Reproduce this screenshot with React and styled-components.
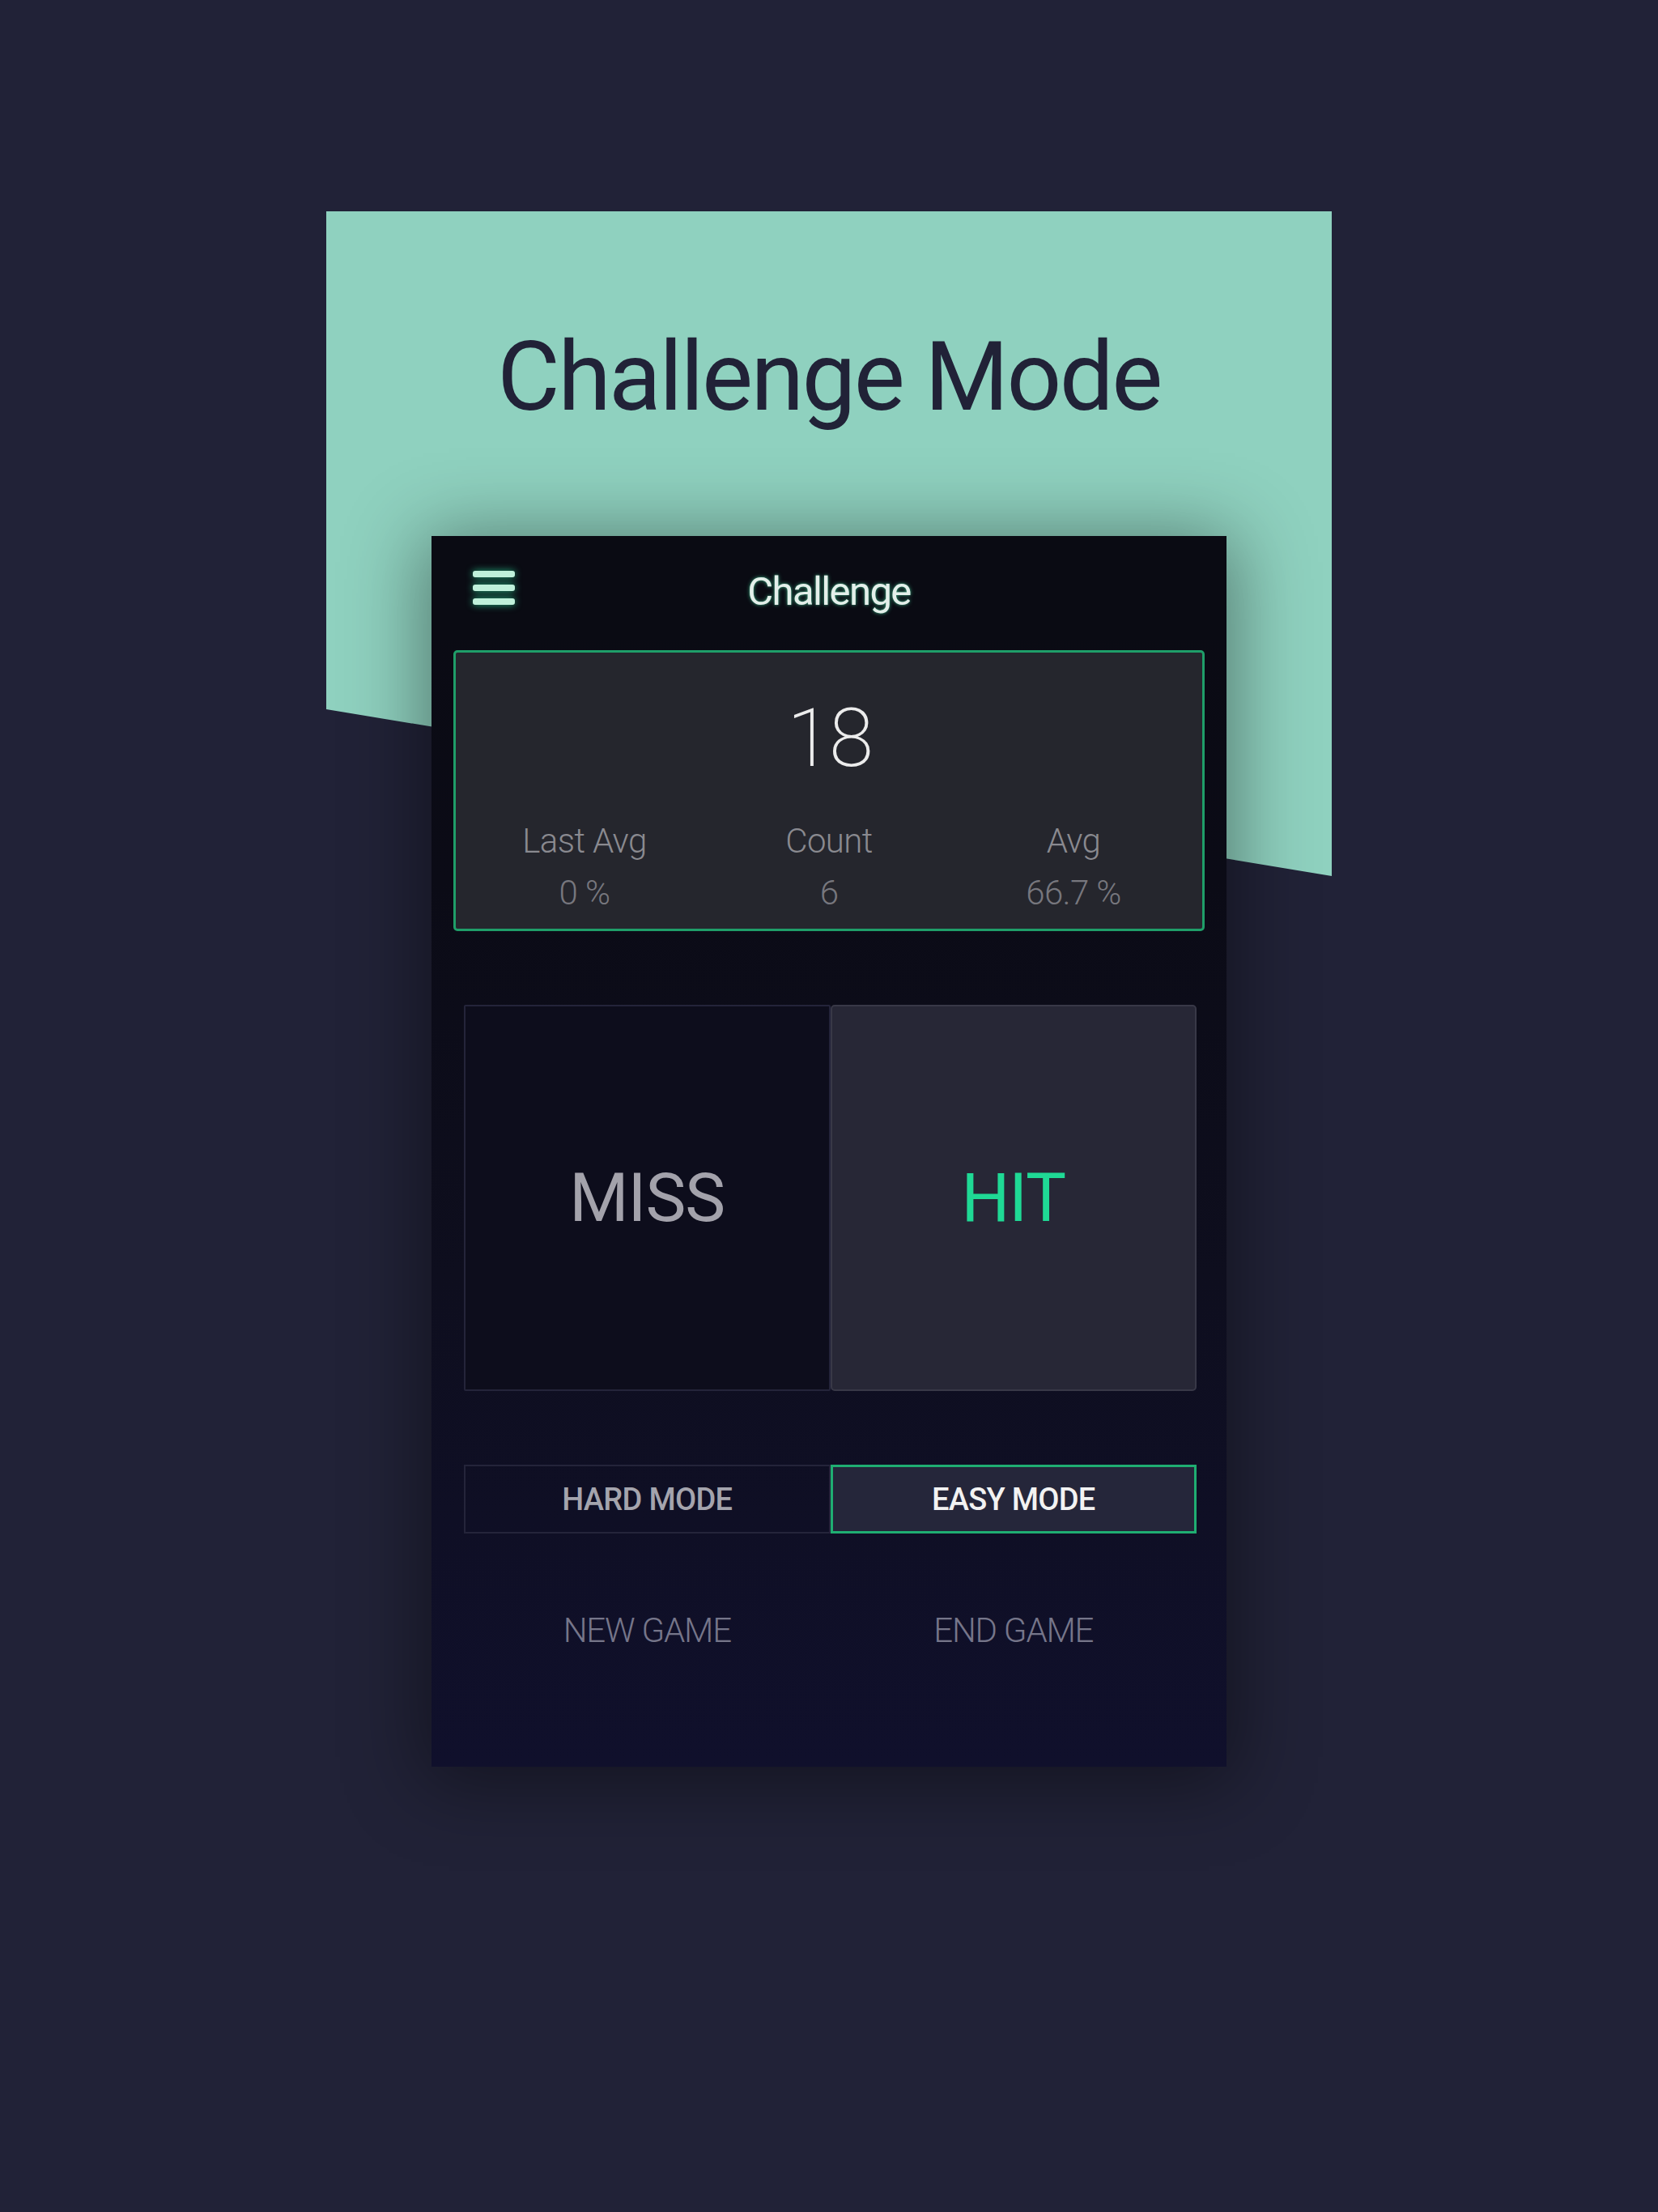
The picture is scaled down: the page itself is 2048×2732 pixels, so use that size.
import React from "react";
import styled, { createGlobalStyle } from "styled-components";

const Global = createGlobalStyle`
  html, body { margin: 0; padding: 0; background: #212237; }
  body { font-family: Roboto, "Liberation Sans", sans-serif; }
  * { box-sizing: border-box; }
`;

const Page = styled.div`
  width: 1242px;
  min-height: 2732px;
  margin: 0 auto;
  padding-top: 261px;
`;

const Hero = styled.section`
  height: 821px;
  background: #8fd1bf;
  clip-path: polygon(0 0, 100% 0, 100% 100%, 0 74.9%);
  padding-top: 145px;
  text-align: center;
`;

const HeroTitle = styled.h1`
  margin: 0;
  font-family: Roboto, "Liberation Sans", sans-serif;
  font-weight: 400;
  font-size: 119px;
  line-height: 1;
  color: #212237;
  letter-spacing: -2.6px;
`;

const Phone = styled.div`
  position: relative;
  z-index: 1;
  width: 982px;
  height: 1520px;
  margin: -420px auto 0;
  background: linear-gradient(180deg, #0a0b13 0%, #0b0b16 28%, #0e0e1e 60%, #10102c 100%);
  box-shadow: 0 10px 90px 10px rgba(0, 0, 0, 0.42);
  display: flex;
  flex-direction: column;
`;

const Header = styled.header`
  height: 128px;
  display: grid;
  grid-template-columns: 1fr auto 1fr;
  align-items: center;
  padding: 0 51px;
  background: #0a0b13;
`;

const MenuIcon = styled.svg`
  width: 52px;
  height: 42px;
  filter: drop-shadow(0 0 5px rgba(40, 200, 140, 0.85));
`;

const HeaderTitle = styled.div`
  font-size: 49px;
  font-weight: 400;
  letter-spacing: -1.6px;
  color: #e4efea;
  text-shadow: 0 0 5px rgba(70, 200, 150, 0.7), 0 0 2px rgba(70, 200, 150, 0.5);
  transform: translateY(4px);
`;

const StatsBox = styled.div`
  margin: 13px 27px 0;
  height: 347px;
  border: 3px solid #1f9e69;
  border-radius: 5px;
  background: #25262d;
  padding-top: 56px;
  display: flex;
  flex-direction: column;
  align-items: center;
`;

const BigNumber = styled.div`
  font-size: 100px;
  font-weight: 200;
  line-height: 1;
  color: #ececec;
  letter-spacing: -3px;
`;

const StatsRow = styled.div`
  margin-top: 56px;
  width: 100%;
  display: grid;
  grid-template-columns: 1fr 1fr 1fr;
  padding: 0 8px;
`;

const Stat = styled.div`
  display: flex;
  flex-direction: column;
  align-items: center;
  gap: 22px;
`;

const StatText = styled.div`
  font-size: 42px;
  font-weight: 300;
  line-height: 1;
  letter-spacing: -0.6px;
  color: ${(p) => (p.$value ? "#77777e" : "#8a8a90")};
`;

const Pair = styled.div`
  display: grid;
  grid-template-columns: 1fr 1fr;
  margin: ${(p) => p.$mt}px 37px 0 40px;
  height: ${(p) => p.$h}px;
`;

const BigButton = styled.button`
  all: unset;
  display: flex;
  align-items: center;
  justify-content: center;
  font-family: Roboto, "Liberation Sans", sans-serif;
  font-size: 84px;
  font-weight: 400;
  letter-spacing: -1px;
  border-radius: ${(p) => (p.$active ? "5px" : "2px")};
  border: 2px solid ${(p) => (p.$active ? "#383847" : "#24243a")};
  background: ${(p) => (p.$active ? "#272736" : "#0d0d1c")};
  color: ${(p) => (p.$active ? "#1fd995" : "#a3a2ab")};
`;

const ModeButton = styled.button`
  all: unset;
  display: flex;
  align-items: center;
  justify-content: center;
  font-family: Roboto, "Liberation Sans", sans-serif;
  font-size: 38px;
  font-weight: 500;
  letter-spacing: -0.7px;
  border: ${(p) => (p.$active ? "3px solid #1fae72" : "2px solid #24243a")};
  background: ${(p) => (p.$active ? "#25263a" : "transparent")};
  color: ${(p) => (p.$active ? "#f2f2f2" : "#a4a4ad")};
`;

const TextButton = styled.button`
  all: unset;
  display: flex;
  align-items: center;
  justify-content: center;
  font-family: Roboto, "Liberation Sans", sans-serif;
  font-size: 42px;
  font-weight: 300;
  letter-spacing: -1.2px;
  color: #76768a;
`;

export default function App() {
  return (
    <>
      <Global />
      <Page>
        <Hero>
          <HeroTitle>Challenge Mode</HeroTitle>
        </Hero>
        <Phone>
          <Header>
            <MenuIcon viewBox="0 0 52 42">
              <rect x="0" y="0" width="52" height="8" rx="3" fill="#bff0da" />
              <rect x="0" y="17" width="52" height="8" rx="3" fill="#bff0da" />
              <rect x="0" y="34" width="52" height="8" rx="3" fill="#bff0da" />
            </MenuIcon>
            <HeaderTitle>Challenge</HeaderTitle>
            <span />
          </Header>
          <StatsBox>
            <BigNumber>18</BigNumber>
            <StatsRow>
              <Stat>
                <StatText>Last Avg</StatText>
                <StatText $value>0 %</StatText>
              </Stat>
              <Stat>
                <StatText>Count</StatText>
                <StatText $value>6</StatText>
              </Stat>
              <Stat>
                <StatText>Avg</StatText>
                <StatText $value>66.7 %</StatText>
              </Stat>
            </StatsRow>
          </StatsBox>
          <Pair $mt={91} $h={477}>
            <BigButton>MISS</BigButton>
            <BigButton $active>HIT</BigButton>
          </Pair>
          <Pair $mt={91} $h={85}>
            <ModeButton>HARD MODE</ModeButton>
            <ModeButton $active>EASY MODE</ModeButton>
          </Pair>
          <Pair $mt={59} $h={120}>
            <TextButton>NEW GAME</TextButton>
            <TextButton>END GAME</TextButton>
          </Pair>
        </Phone>
      </Page>
    </>
  );
}
